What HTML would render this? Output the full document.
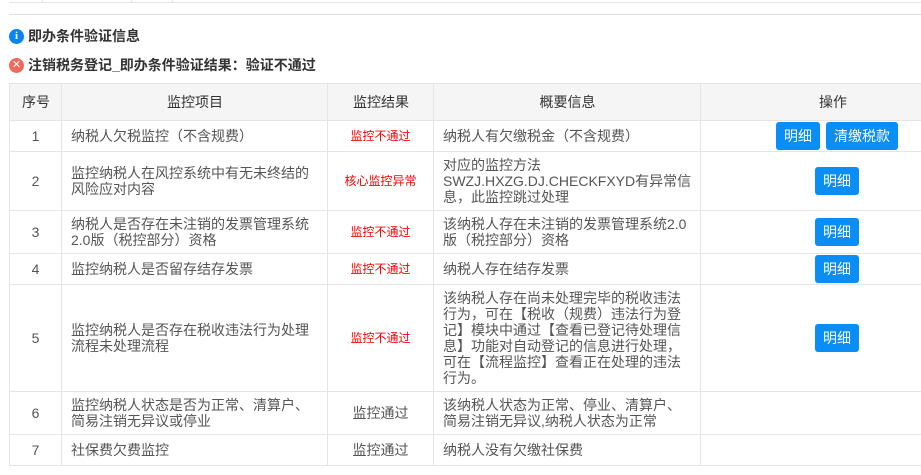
<!DOCTYPE html>
<html><head><meta charset="utf-8"><style>
body{margin:0;width:921px;height:475px;background:#fff;font-family:"Liberation Sans","Noto Sans CJK SC",sans-serif;color:#555;font-size:14px;overflow:hidden;position:relative}
.top{position:absolute;left:9px;top:0;width:912px;height:2px;border-bottom:1px solid #e5e5e5}
.tl{position:absolute;top:0;height:2px;border-left:1px solid #e5e5e5}
.hr{position:absolute;left:9px;top:14px;width:912px;border-top:1px solid #e0e0e0}
.t1{position:absolute;left:9px;top:28px;font-weight:bold;color:#333;font-size:14px;display:flex;align-items:center;line-height:16px}
.ic{width:15px;height:15px;border-radius:50%;color:#fff;font-size:11px;text-align:center;line-height:15px;margin-right:4px;font-weight:bold}
table{position:absolute;left:9px;top:83px;border-collapse:collapse;width:930px;table-layout:fixed}
td,th{border:1px solid #e5e5e5;padding:0 8px 0 9px;line-height:16px;font-weight:normal;vertical-align:middle}
th{background:#f5f5f5;color:#333;text-align:center;height:36px}
td.c{text-align:center;padding:0}
.r{color:#f00;font-size:12px}
td.o{text-align:center;padding:0 0 0 34px}
.b{display:inline-block;background:#0a8ef5;color:#fff;border-radius:3px;height:28px;line-height:28px;padding:0 8px;font-size:14px;margin:0 3px}
</style></head><body>
<div class="top"></div><div class="tl" style="left:42px"></div><div class="tl" style="left:131px"></div><div class="tl" style="left:172px"></div>
<div class="hr"></div>
<div class="t1"><div class="ic" style="background:#0a84f0;font-family:'Liberation Serif',serif">i</div>即办条件验证信息</div>
<div class="t1" style="top:57px"><div class="ic" style="background:#f06a5c;font-weight:normal">✕</div>注销税务登记_即办条件验证结果：验证不通过</div>
<table>
<colgroup><col style="width:52px"><col style="width:266px"><col style="width:106px"><col style="width:267px"><col style="width:239px"></colgroup>
<tr><th>序号</th><th>监控项目</th><th>监控结果</th><th>概要信息</th><th class="o" style="padding-left:34px">操作</th></tr>
<tr style="height:31px"><td class="c">1</td><td>纳税人欠税监控（不含规费）</td><td class="c r">监控不通过</td><td>纳税人有欠缴税金（不含规费）</td><td class="o"><span class="b">明细</span><span class="b">清缴税款</span></td></tr>
<tr style="height:59px"><td class="c">2</td><td>监控纳税人在风控系统中有无未终结的风险应对内容</td><td class="c r">核心监控异常</td><td>对应的监控方法SWZJ.HXZG.DJ.CHECKFXYD有异常信息，此监控跳过处理</td><td class="o"><span class="b">明细</span></td></tr>
<tr style="height:43px"><td class="c">3</td><td>纳税人是否存在未注销的发票管理系统2.0版（税控部分）资格</td><td class="c r">监控不通过</td><td>该纳税人存在未注销的发票管理系统2.0版（税控部分）资格</td><td class="o"><span class="b">明细</span></td></tr>
<tr style="height:31px"><td class="c">4</td><td>监控纳税人是否留存结存发票</td><td class="c r">监控不通过</td><td>纳税人存在结存发票</td><td class="o"><span class="b">明细</span></td></tr>
<tr style="height:107px"><td class="c">5</td><td>监控纳税人是否存在税收违法行为处理流程未处理流程</td><td class="c r">监控不通过</td><td>该纳税人存在尚未处理完毕的税收违法行为，可在【税收（规费）违法行为登记】模块中通过【查看已登记待处理信息】功能对自动登记的信息进行处理，可在【流程监控】查看正在处理的违法行为。</td><td class="o"><span class="b">明细</span></td></tr>
<tr style="height:43px"><td class="c">6</td><td>监控纳税人状态是否为正常、清算户、简易注销无异议或停业</td><td class="c">监控通过</td><td>该纳税人状态为正常、停业、清算户、简易注销无异议,纳税人状态为正常</td><td></td></tr>
<tr style="height:31px"><td class="c">7</td><td>社保费欠费监控</td><td class="c">监控通过</td><td>纳税人没有欠缴社保费</td><td></td></tr>
</table>
</body></html>
